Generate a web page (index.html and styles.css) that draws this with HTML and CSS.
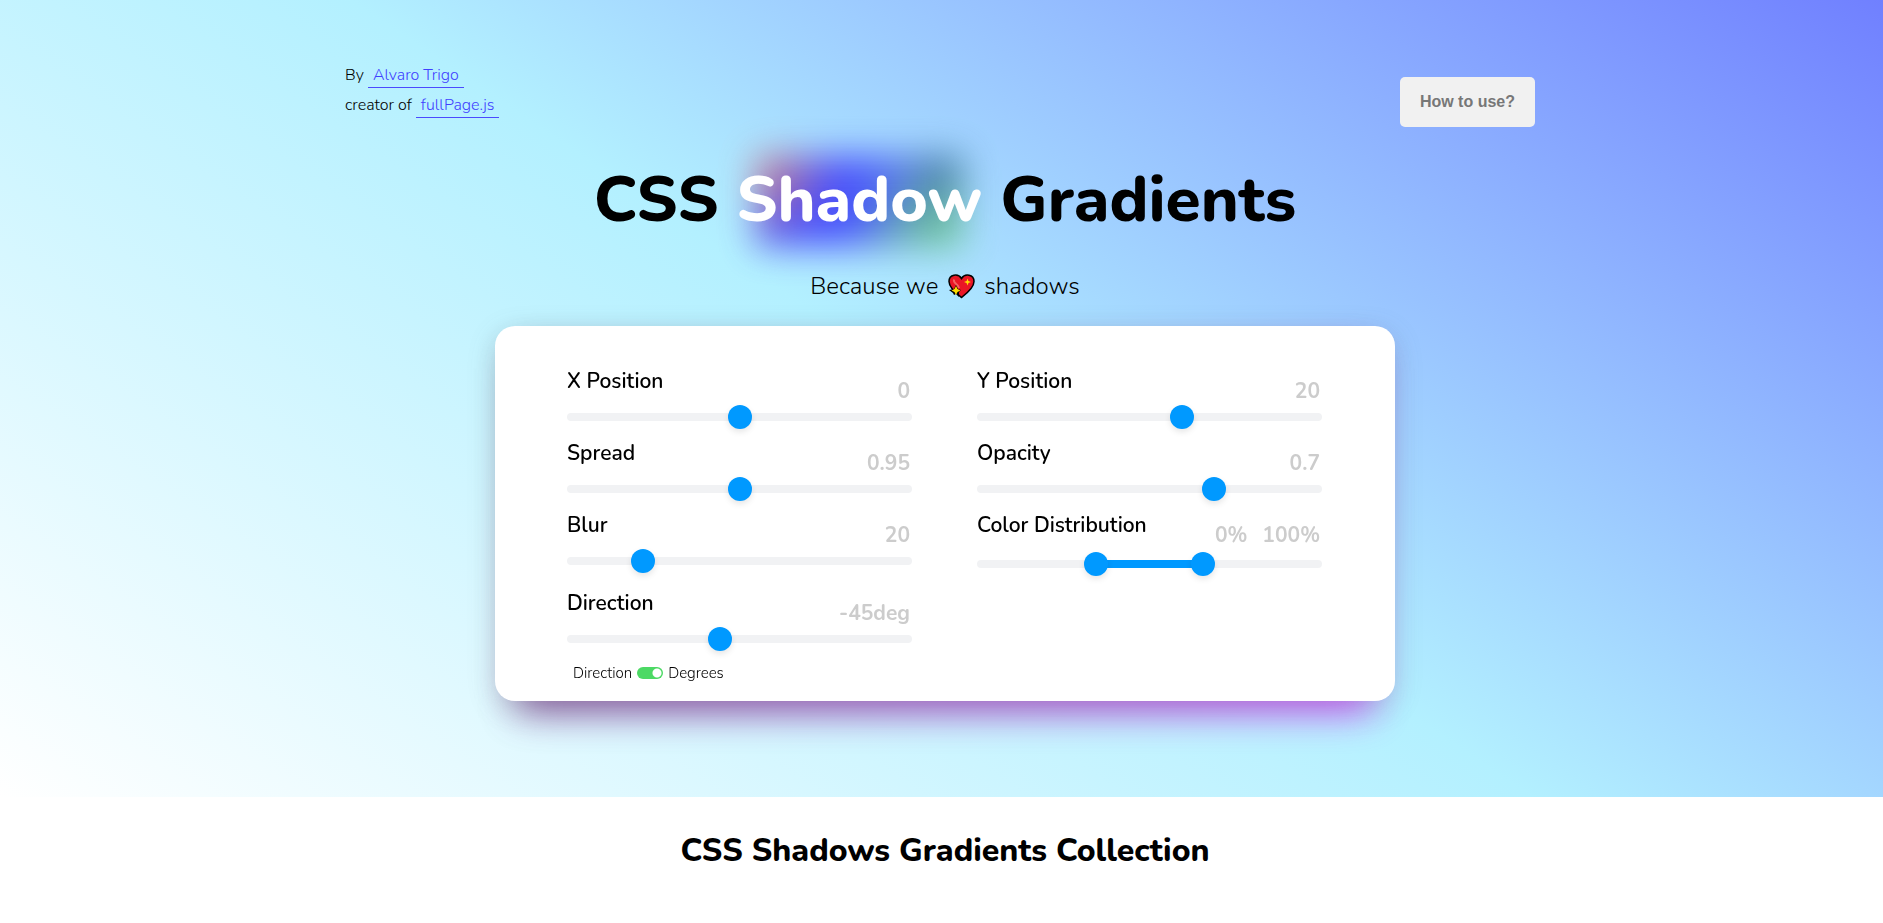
FILE: index.html
```html
<!DOCTYPE html>
<html lang="en">
<head>
<meta charset="utf-8">
<meta name="viewport" content="width=device-width, initial-scale=1">
<title>CSS Shadow Gradients</title>
<link rel="stylesheet" href="styles.css">
</head>
<body>
<div class="hero">
  <header class="top">
    <div class="credits">
      <p>By <a href="#author">Alvaro Trigo</a></p>
      <p>creator of <a href="#fullpage">fullPage.js</a></p>
    </div>
    <button class="help" type="button">How to use?</button>
  </header>
  <h1 class="title">CSS <span class="glow">Shadow</span> Gradients</h1>
  <p class="tagline">Because we
    <svg class="heart" viewBox="0 0 28 26" role="img" aria-label="love">
      <path d="M14.500 24.500C10 21 2 15 2 8.500C2 1.500 11 0 14.500 5.500C18 0 27 1.500 27 8.500C27 15 19 21 14.500 24.500Z" fill="#ea1525" stroke="#000" stroke-width="1.500"/>
      <path d="M7 6.500C6 11 11 10 12 15" fill="none" stroke="#f4645f" stroke-width="2"/>
      <path d="M9 12L11 16L14 17L12 19L12 24L9 21L7 22L6 20L2 17L7 16Z" fill="#000"/>
      <path d="M9 13L10.500 16L13.500 17.500L10.500 19L9 22L7.500 19L4.500 17.500L7.500 16Z" fill="#fd0"/>
      <path d="M20.500 5.500L21.400 8.100L24 9L21.400 9.900L20.500 12.500L19.600 9.900L17 9L19.600 8.100Z" fill="#fd0"/>
    </svg>
    shadows</p>
  <form class="card">
    <div class="column">
      <div class="field"><label for="x">X Position</label><output for="x">0</output><input class="range" id="x" type="range" min="-50" max="50" value="0"></div>
      <div class="field"><label for="spread">Spread</label><output for="spread">0.95</output><input class="range" id="spread" type="range" min="0" max="100" value="50"></div>
      <div class="field"><label for="blur">Blur</label><output for="blur">20</output><input class="range" id="blur" type="range" min="0" max="100" value="20"></div>
      <div class="field field-direction"><label for="direction">Direction</label><output for="direction">-45deg</output><input class="range" id="direction" type="range" min="0" max="100" value="44"></div>
      <div class="mode"><span>Direction</span><input class="switch" id="mode" type="checkbox" checked aria-label="Use degrees"><label for="mode">Degrees</label></div>
    </div>
    <div class="column">
      <div class="field"><label for="y">Y Position</label><output for="y">20</output><input class="range" id="y" type="range" min="-100" max="100" value="20"></div>
      <div class="field"><label for="opacity">Opacity</label><output for="opacity">0.7</output><input class="range" id="opacity" type="range" min="0" max="1" step="0.1" value="0.7"></div>
      <div class="field field-dual"><label for="from">Color Distribution</label><output for="from to"><span>0%</span><span>100%</span></output>
        <div class="dual">
          <input class="range" id="from" type="range" min="-100" max="200" value="0">
          <input class="range" id="to" type="range" min="-100" max="200" value="100" aria-label="Color distribution end">
        </div>
      </div>
    </div>
  </form>
</div>
<main class="collection">
  <h2>CSS Shadows Gradients Collection</h2>
</main>
</body>
</html>
```
FILE: styles.css
```css
* { box-sizing: border-box; }

body {
  margin: 0;
  background: #fff;
  color: #000;
  font-family: Nunito, Lato, sans-serif;
  overflow-x: hidden;
}

.hero {
  padding: 60px 0 96px 7px;
  background: linear-gradient(34deg, #fff 0%, #b3f0ff 50%, #7080ff 100%);
}

.top {
  display: flex;
  justify-content: space-between;
  align-items: flex-start;
  max-width: 1200px;
  margin: 0 auto;
  padding-right: 10px;
}

.credits {
  font-size: 16px;
  font-weight: 300;
  line-height: 30px;
  color: #000;
}

.credits p { margin: 0; }

.credits a {
  display: inline-block;
  padding: 0 5px;
  line-height: 23px;
  border-bottom: 1px solid #4a4aff;
  color: #4040ff;
  text-decoration: none;
}

.help {
  margin-top: 17px;
  height: 50px;
  padding: 0 20px;
  border: 0;
  border-radius: 5px;
  background: #f1f1f1;
  color: #777;
  font: bold 16px "Liberation Sans", Arial, sans-serif;
}

.title {
  margin: 28px 0 0;
  text-align: center;
  font-size: 64px;
  line-height: 90px;
  font-weight: 800;
}

.glow {
  position: relative;
  z-index: 0;
  color: #fff;
}

.glow::before {
  content: "";
  position: absolute;
  z-index: -1;
  inset: 0 20px -2px;
  background:
    radial-gradient(circle at 0 10%, #e0706a 0, transparent 38%),
    radial-gradient(circle at 92% 100%, #60c870 0, transparent 44%),
    radial-gradient(circle at 100% 10%, #1d4d80 0, transparent 28%),
    linear-gradient(100deg, transparent 40%, #6098d0 100%),
    #3434ff;
  filter: blur(18px);
  opacity: 0.85;
}

.tagline {
  display: flex;
  justify-content: center;
  align-items: center;
  gap: 9px;
  margin: 24px 0 0;
  font-size: 24px;
  line-height: 34px;
  font-weight: 300;
}

.heart { width: 28px; height: 26px; }

.card {
  position: relative;
  display: grid;
  grid-template-columns: 1fr 1fr;
  column-gap: 65px;
  max-width: 900px;
  margin: 23px auto 0;
  padding: 37px 73px 17px 72px;
  border-radius: 20px;
  background: #fff;
  box-shadow: 0 7px 29px rgba(100, 100, 111, 0.2);
  transform-style: preserve-3d;
}

.card::before {
  content: "";
  position: absolute;
  inset: 0;
  transform: translate3d(0, 20px, -1px) scale(0.95);
  background: linear-gradient(-45deg, #e010ff 0%, #301038 100%);
  filter: blur(20px);
  opacity: 0.7;
}

.field {
  display: grid;
  grid-template-columns: 1fr auto;
  grid-template-rows: 46px auto;
  height: 72px;
}

.field label {
  font-size: 21px;
  line-height: 36px;
  font-weight: 600;
}

.field output {
  display: flex;
  gap: 15px;
  padding: 10px 2px 0 0;
  font-size: 21px;
  line-height: 36px;
  font-weight: 700;
  color: #ccc;
}

.field .range { grid-column: 1 / -1; }

.field-direction { margin-top: 6px; }

.range {
  appearance: none;
  width: 100%;
  height: 8px;
  margin: 4px 0 0;
  border-radius: 4px;
  background: #f1f2f4;
}

.range::-webkit-slider-thumb {
  appearance: none;
  width: 24px;
  height: 24px;
  border-radius: 50%;
  background: #09f;
  box-shadow: 0 3px 6px rgba(0, 0, 0, 0.1);
}

.dual {
  display: grid;
  grid-column: 1 / -1;
  height: 8px;
  margin-top: 7px;
  border-radius: 4px;
  background: linear-gradient(90deg, #f1f2f4 36%, #09f 36% 64%, #f1f2f4 64%);
}

.field .dual .range {
  grid-area: 1 / 1;
  margin: 0;
  background: none;
  pointer-events: none;
}

.field .dual .range::-webkit-slider-thumb { pointer-events: auto; }

.mode {
  display: flex;
  align-items: center;
  gap: 5px;
  margin-top: 5px;
  padding-left: 6px;
  font-size: 15px;
  font-weight: 300;
  line-height: 22px;
  color: #000;
}

.switch {
  appearance: none;
  width: 26px;
  height: 12px;
  margin: 0;
  border-radius: 6px;
  background: radial-gradient(circle at 20px 6px, #fff 4px, transparent 5px) #4cd964;
}

.collection {
  padding: 32px 0 52px 7px;
  text-align: center;
}

h2 {
  margin: 0;
  font-size: 32px;
  line-height: 44px;
  font-weight: 800;
}
```
